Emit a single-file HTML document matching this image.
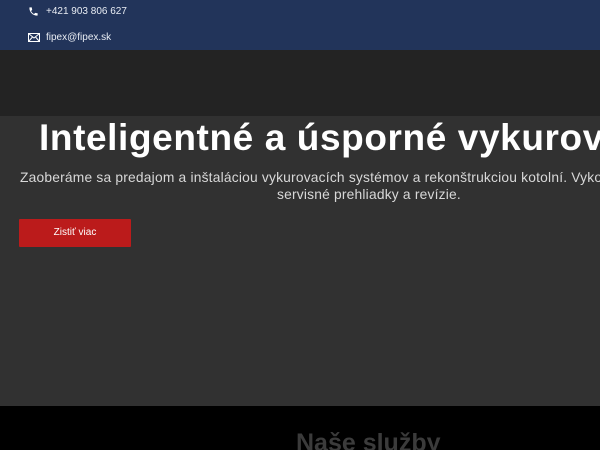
<!DOCTYPE html>
<html><head><meta charset="utf-8"><style>
html{overflow:hidden;width:600px;height:450px}
body{margin:0;width:600px;height:450px;overflow:hidden;position:relative;font-family:"Liberation Sans",sans-serif;background:#000}
.top{position:absolute;left:0;top:0;width:600px;height:50px;background:#22345a;color:#e8ecf3;font-size:10px}
.top div{position:absolute;left:46px}
.hdr{position:absolute;top:50px;left:0;width:600px;height:66px;background:#232323}
.hero{position:absolute;top:116px;left:0;width:600px;height:290px;background:#313131;overflow:hidden}
h1{position:absolute;left:39px;top:1px;margin:0;font-size:37px;font-weight:bold;color:#fff;white-space:nowrap;letter-spacing:0.6px}
.sub{position:absolute;left:20px;top:54px;font-size:13.8px;color:#d8d8d8;white-space:nowrap;letter-spacing:0.2px}
.sub2{position:absolute;left:277px;top:71px;font-size:13.8px;color:#d8d8d8;white-space:nowrap;letter-spacing:0.2px}
.btn{position:absolute;left:19px;top:103px;width:112px;height:28px;background:#bb1b1b;color:#fff;font-size:10px;text-align:center;line-height:28px;border-radius:1px}
.low{position:absolute;top:406px;left:0;width:600px;height:44px;overflow:hidden}
.ns{position:absolute;left:296px;top:22px;font-size:25px;font-weight:bold;color:#3b3b3b;white-space:nowrap;line-height:30px}
</style></head><body>
<div class="top">
<svg style="position:absolute;left:28px;top:6px" width="11" height="11" viewBox="0 0 24 24"><path fill="#fff" d="M6.6 10.8c1.4 2.8 3.8 5.1 6.6 6.6l2.2-2.2c.3-.3.7-.4 1-.2 1.1.4 2.300.6 3.6.6.6 0 1 .4 1 1V20c0 .6-.4 1-1 1C10.6 21 3 13.4 3 4c0-.6.4-1 1-1h3.5c.6 0 1 .4 1 1 0 1.3.2 2.5.6 3.6.1.3 0 .7-.2 1z"/></svg>
<div style="top:6px">+421 903 806 627</div>
<svg style="position:absolute;left:28px;top:33px" width="12" height="9" viewBox="0 0 12 9"><rect x="0.5" y="0.5" width="11" height="8" fill="none" stroke="#fff"/><path d="M0.5 0.5L6 5L11.5 0.5M0.5 8.5L4.5 4M11.5 8.5L7.5 4" stroke="#fff" fill="none"/></svg>
<div style="top:32px">fipex@fipex.sk</div>
</div>
<div class="hdr"></div>
<div class="hero">
<h1>Inteligentné a úsporné vykurovanie</h1>
<div class="sub">Zaoberáme sa predajom a inštaláciou vykurovacích systémov a rekonštrukciou kotolní. Vykonávame</div>
<div class="sub2">servisné prehliadky a revízie.</div>
<div class="btn">Zistiť viac</div>
</div>
<div class="low"><div class="ns">Naše služby</div></div>
</body></html>
